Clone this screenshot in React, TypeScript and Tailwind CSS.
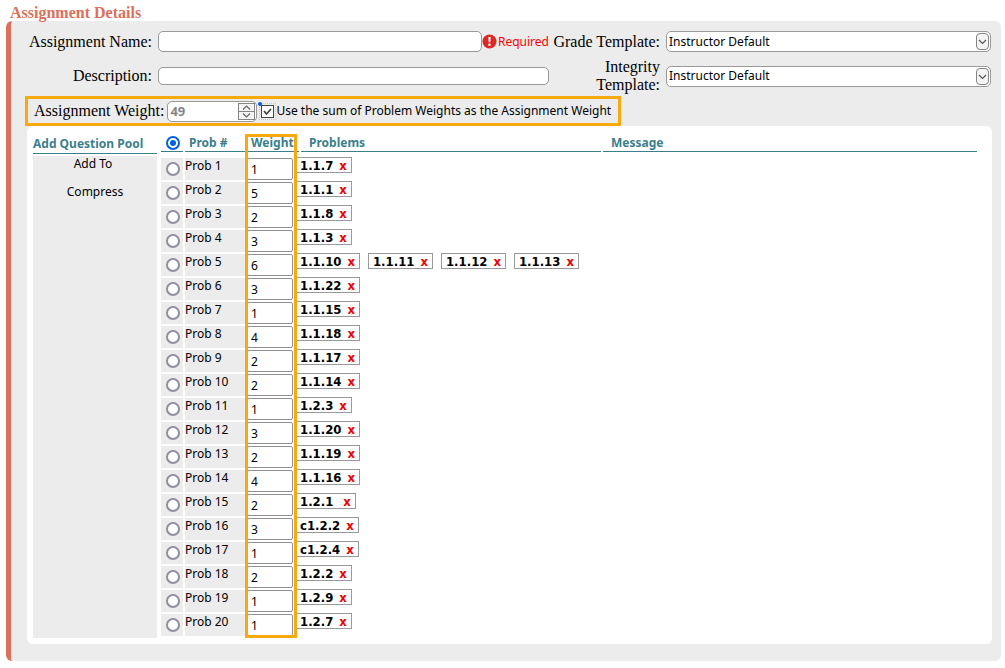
import React, { useState } from "react";

type Problem = { id: string; wide?: boolean };
type Row = { weight: number; problems: Problem[] };

const rows: Row[] = [
  { weight: 1, problems: [{ id: "1.1.7" }] },
  { weight: 5, problems: [{ id: "1.1.1" }] },
  { weight: 2, problems: [{ id: "1.1.8" }] },
  { weight: 3, problems: [{ id: "1.1.3" }] },
  { weight: 6, problems: [{ id: "1.1.10" }, { id: "1.1.11" }, { id: "1.1.12" }, { id: "1.1.13" }] },
  { weight: 3, problems: [{ id: "1.1.22" }] },
  { weight: 1, problems: [{ id: "1.1.15" }] },
  { weight: 4, problems: [{ id: "1.1.18" }] },
  { weight: 2, problems: [{ id: "1.1.17" }] },
  { weight: 2, problems: [{ id: "1.1.14" }] },
  { weight: 1, problems: [{ id: "1.2.3" }] },
  { weight: 3, problems: [{ id: "1.1.20" }] },
  { weight: 2, problems: [{ id: "1.1.19" }] },
  { weight: 4, problems: [{ id: "1.1.16" }] },
  { weight: 2, problems: [{ id: "1.2.1", wide: true }] },
  { weight: 3, problems: [{ id: "c1.2.2" }] },
  { weight: 1, problems: [{ id: "c1.2.4" }] },
  { weight: 2, problems: [{ id: "1.2.2" }] },
  { weight: 1, problems: [{ id: "1.2.9" }] },
  { weight: 1, problems: [{ id: "1.2.7" }] },
];

const labelClass = "text-right font-['Liberation_Serif',serif] text-[16px] leading-[18px]";

function TemplateSelect({ id }: { id: string }) {
  return (
    <div className="relative">
      <select
        id={id}
        className="block h-[21px] w-full appearance-none rounded-[5px] border border-[#999] bg-white pl-[2px] text-[12px] leading-[18px]"
      >
        <option>Instructor Default</option>
      </select>
      <svg
        className="pointer-events-none absolute top-[2px] right-[2px] h-[17px] w-[13px]"
        viewBox="0 0 13 17"
        fill="none"
        aria-hidden="true"
      >
        <rect x="0.5" y="0.5" width="12" height="16" rx="3.5" fill="#f4f4f4" stroke="#858585" />
        <path d="M3 7l3.5 3.5L10 7" stroke="#555" strokeWidth="1.2" />
      </svg>
    </div>
  );
}

function PoolRadio({ label, checked, onChange }: { label: string; checked: boolean; onChange: () => void }) {
  return (
    <input
      type="radio"
      name="pool"
      aria-label={label}
      checked={checked}
      onChange={onChange}
      className="ml-[5px] block size-[14px] appearance-none rounded-full border-2 border-[#8f8f9d] bg-white checked:border-[#0060df] checked:bg-[#0060df] checked:bg-clip-content checked:p-[2px]"
    />
  );
}

function HeaderCell({ children, span }: { children: React.ReactNode; span?: number }) {
  return (
    <th colSpan={span} className="p-0 pb-1 text-left font-bold">
      <div className="flex h-[18px] items-center border-b border-[#3b7f8c] pt-px whitespace-nowrap">{children}</div>
    </th>
  );
}

export default function App() {
  const [selected, setSelected] = useState(0);
  const [useSum, setUseSum] = useState(true);

  return (
    <main className="bg-white pr-1 pb-[7px] pl-[6px] font-['Noto_Sans',sans-serif] text-[12px] text-black">
      <h2 className="pt-1 pl-1 font-['Liberation_Serif',serif] text-[16px] leading-[17px] font-bold text-[#dc705b]">
        Assignment Details
      </h2>
      <section className="rounded-[6px] border-l-[5px] border-[#dc705b] bg-[#ececec] pb-[17px]">
        <div className="grid grid-cols-[141px_391fr_105px_325fr] items-center gap-x-[6px] gap-y-[6px] pt-[10px] pr-[10px]">
          <label htmlFor="name" className={labelClass}>
            Assignment Name:
          </label>
          <div className="flex items-center">
            <input
              id="name"
              type="text"
              className="h-[21px] min-w-0 flex-1 rounded-[5px] border border-[#999] bg-white px-1"
            />
            <svg className="size-[15px] shrink-0" viewBox="0 0 15 15" aria-hidden="true">
              <circle cx="7.5" cy="7.5" r="7" fill="#dd2727" />
              <path d="M6.3 3h2.4l-.4 5.2H6.7z" fill="#fff" />
              <circle cx="7.5" cy="10.8" r="1.3" fill="#fff" />
            </svg>
            <span className="pl-px leading-4 text-[#f00]">Required</span>
          </div>
          <div className="flex justify-end whitespace-nowrap">
            <label htmlFor="grade" className={labelClass}>
              Grade Template:
            </label>
          </div>
          <TemplateSelect id="grade" />

          <label htmlFor="description" className={labelClass}>
            Description:
          </label>
          <input
            id="description"
            type="text"
            className="h-[18px] w-full rounded-[5px] border border-[#999] bg-white px-1"
          />
          <label htmlFor="integrity" className={labelClass}>
            Integrity Template:
          </label>
          <TemplateSelect id="integrity" />
        </div>

        <div className="mt-[2px] ml-[14px] flex h-[30px] w-fit items-center border-3 border-[#f8a90d] pr-[7px] pl-[6px]">
          <label htmlFor="weight" className={labelClass}>
            Assignment Weight:
          </label>
          <div className="relative ml-[3px]">
            <input
              id="weight"
              type="text"
              inputMode="numeric"
              disabled
              value="49"
              readOnly
              className="block h-[21px] w-[90px] rounded-[5px] border border-[#999] bg-white pl-[2px] text-[13px] font-bold text-[#858585]"
            />
            <svg
              className="pointer-events-none absolute top-[2px] right-[2px] h-[17px] w-[17px]"
              viewBox="0 0 17 17"
              fill="none"
              stroke="#858585"
              aria-hidden="true"
            >
              <rect x="0.5" y="0.5" width="16" height="16" fill="#f4f4f4" />
              <path d="M0.5 8.5h16" />
              <path d="M5 6.5l3.5-3.5L12 6.5M5 10.5l3.5 3.5L12 10.5" stroke="#666" strokeWidth="1.2" />
            </svg>
          </div>
          <div className="relative ml-[2px] border border-dotted border-[#efc95a] p-px">
            <input
              id="sum"
              type="checkbox"
              checked={useSum}
              onChange={() => setUseSum(!useSum)}
              className="block size-[13px] appearance-none border border-[#444] bg-white"
            />
            {useSum && (
              <svg className="pointer-events-none absolute inset-px size-[13px]" viewBox="0 0 13 13" fill="none" aria-hidden="true">
                <path d="M3 6l2.5 3L10 4" stroke="#444" strokeWidth="1.8" />
              </svg>
            )}
            <span className="absolute -top-[2px] -left-[2px] size-1 rounded-full bg-[#0a5be0]" />
          </div>
          <label htmlFor="sum" className="whitespace-nowrap">
            Use the sum of Problem Weights as the Assignment Weight
          </label>
        </div>

        <div className="mr-[9px] ml-4 flex rounded-[6px] bg-white pt-[6px] pr-[13px] pb-[6px] pl-[6px]">
          <div className="mr-[2px] flex w-[124px] shrink-0 flex-col pt-[2px]">
            <h3 className="mb-[2px] flex h-5 items-center border-b border-[#3b7f8c] font-bold whitespace-nowrap text-[#3b7f8c]">
              Add Question Pool
            </h3>
            <div className="flex flex-1 flex-col items-center gap-3 bg-[#ececec]">
              <button type="button" className="pr-1 leading-4">
                Add To
              </button>
              <button type="button" className="leading-4">
                Compress
              </button>
            </div>
          </div>

          <div className="relative min-w-0 flex-1">
            <table className="w-full table-fixed border-separate border-spacing-[2px]">
              <colgroup>
                <col className="w-[22px]" />
                <col className="w-[60px]" />
                <col className="w-[46px]" />
                <col className="w-[4px]" />
                <col className="w-[300px]" />
                <col />
              </colgroup>
              <thead className="text-[#3b7f8c]">
                <tr>
                  <HeaderCell>
                    <PoolRadio label="New problem" checked={selected === 0} onChange={() => setSelected(0)} />
                  </HeaderCell>
                  <HeaderCell>
                    <span className="pl-1">Prob #</span>
                  </HeaderCell>
                  <HeaderCell span={2}>
                    <span className="pl-1">Weight</span>
                  </HeaderCell>
                  <HeaderCell>
                    <span className="pl-2">Problems</span>
                  </HeaderCell>
                  <HeaderCell>
                    <span className="pl-2">Message</span>
                  </HeaderCell>
                </tr>
              </thead>
              <tbody>
                {rows.map((row, i) => (
                  <tr key={i} className="h-[22px]">
                    <td className="bg-[#ececec] p-0">
                      <PoolRadio
                        label={`Prob ${i + 1}`}
                        checked={selected === i + 1}
                        onChange={() => setSelected(i + 1)}
                      />
                    </td>
                    <td className="bg-[#ececec] p-0 align-top leading-4">Prob {i + 1}</td>
                    <td className="p-0">
                      <input
                        type="text"
                        aria-label={`Weight of Prob ${i + 1}`}
                        defaultValue={row.weight}
                        className="block h-[22px] w-full rounded-[2px] border border-[#8f8f9d] bg-white pt-px pl-[3px]"
                      />
                    </td>
                    <td colSpan={2} className="p-0 align-top">
                      <div className="-mt-px flex gap-2">
                        {row.problems.map((p) => (
                          <span
                            key={p.id}
                            className="flex h-4 items-center border border-[#999] px-1 pt-px font-['DejaVu_Sans_Condensed',sans-serif] text-[13px] leading-[14px] font-bold"
                          >
                            {p.id}
                            <button
                              type="button"
                              aria-label={`Remove ${p.id}`}
                              className={p.wide ? "pl-[10px] text-[#e00]" : "pl-[6px] text-[#e00]"}
                            >
                              x
                            </button>
                          </span>
                        ))}
                      </div>
                    </td>
                    <td className="p-0" />
                  </tr>
                ))}
              </tbody>
            </table>
            <div className="pointer-events-none absolute top-[2px] bottom-0 left-[86px] w-[52px] border-3 border-[#f8a90d]" />
          </div>
        </div>
      </section>
    </main>
  );
}
